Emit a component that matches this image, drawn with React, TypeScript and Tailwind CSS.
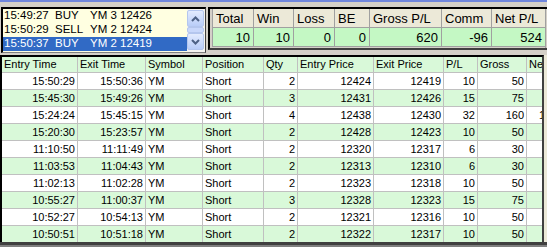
import React from "react";

const trades: string[][] = [
  ["15:50:29", "15:50:36", "YM", "Short", "2", "12424", "12419", "10", "50", ""],
  ["15:45:30", "15:49:26", "YM", "Short", "3", "12431", "12426", "15", "75", ""],
  ["15:24:24", "15:45:15", "YM", "Short", "4", "12438", "12430", "32", "160", "1"],
  ["15:20:30", "15:23:57", "YM", "Short", "2", "12428", "12423", "10", "50", ""],
  ["11:10:50", "11:11:49", "YM", "Short", "2", "12320", "12317", "6", "30", ""],
  ["11:03:53", "11:04:43", "YM", "Short", "2", "12313", "12310", "6", "30", ""],
  ["11:02:13", "11:02:28", "YM", "Short", "2", "12323", "12318", "10", "50", ""],
  ["10:55:27", "11:00:37", "YM", "Short", "3", "12328", "12323", "15", "75", ""],
  ["10:52:27", "10:54:13", "YM", "Short", "2", "12321", "12316", "10", "50", ""],
  ["10:50:51", "10:51:18", "YM", "Short", "2", "12322", "12317", "10", "50", ""],
];

const cols = [
  { label: "Entry Time", w: "w-[76px]", right: true },
  { label: "Exit Time", w: "w-[68px]", right: true },
  { label: "Symbol", w: "w-[57px]", right: false },
  { label: "Position", w: "w-[61px]", right: false },
  { label: "Qty", w: "w-[34px]", right: true },
  { label: "Entry Price", w: "w-[76px]", right: true },
  { label: "Exit Price", w: "w-[70px]", right: true },
  { label: "P/L", w: "w-[34px]", right: true },
  { label: "Gross", w: "w-[49px]", right: true },
  { label: "Net", w: "w-[15px]", right: false },
];

const orders = [
  ["15:49:27", "BUY", "YM 3 12426"],
  ["15:50:29", "SELL", "YM 2 12424"],
  ["15:50:37", "BUY", "YM 2 12419"],
];

const stats = [
  { label: "Total", value: "10", w: "w-[41px]" },
  { label: "Win", value: "10", w: "w-[40px]" },
  { label: "Loss", value: "0", w: "w-[41px]" },
  { label: "BE", value: "0", w: "w-[35px]" },
  { label: "Gross P/L", value: "620", w: "w-[72px]" },
  { label: "Comm", value: "-96", w: "w-[50px]" },
  { label: "Net P/L", value: "524", w: "w-[54px]" },
];

function ScrollBtn({ up }: { up: boolean }) {
  return (
    <div className="h-[17px] w-[17px] rounded-[2px] border border-[#b4c6ee] bg-gradient-to-b from-[#e3ebfe] to-[#b9cdf8] flex items-center justify-center">
      <svg width="9" height="6" viewBox="0 0 9 6">
        {up ? (
          <path d="M1 5 L4.5 1.5 L8 5" stroke="#4d6185" strokeWidth="2" fill="none" />
        ) : (
          <path d="M1 1 L4.5 4.5 L8 1" stroke="#4d6185" strokeWidth="2" fill="none" />
        )}
      </svg>
    </div>
  );
}

export default function App() {
  return (
    <div
      className="w-[547px] h-[247px] bg-[#d4d0c8] overflow-hidden flex flex-col"
      style={{ fontFamily: '"Liberation Sans", Arial, sans-serif' }}
    >
      <div className="h-[2px] bg-[#6f86dd] shrink-0" />
      <div className="h-[53px] shrink-0 flex pt-[5px]">
        {/* order list */}
        <div className="ml-[1px] w-[205px] h-[46px] border-l-2 border-t-2 border-black border-r border-b border-r-[#404040] border-b-[#808080] bg-[#ffffe1] flex">
          <div className="flex-1 flex flex-col text-[11.5px] text-black">
            {orders.map((o, i) => (
              <div
                key={i}
                className={
                  "h-[14px] flex items-center pl-[1px] leading-none " +
                  (i === 2 ? "bg-[#316ac5] text-white" : "")
                }
              >
                <span className="w-[51px]">{o[0]}</span>
                <span className="w-[35px]">{o[1]}</span>
                <span>{o[2]}</span>
              </div>
            ))}
          </div>
          <div className="w-[18px] flex flex-col items-start pt-[1px] bg-[#f5f4ef]">
            <ScrollBtn up={true} />
            <div className="h-[6px] w-[17px] my-[0px] rounded-[2px] border border-[#b4c6ee] bg-[#c8d7fb]" />
            <ScrollBtn up={false} />
          </div>
        </div>
        {/* stats */}
        <div className="ml-[2px] w-[339px] h-[43px] border-l-2 border-t-2 border-black border-b-2 border-b-[#404040] pl-[2px] flex">
          <div className="flex flex-col border-r border-[#a0a0a0]">
            <div className="flex h-[19px]">
              {stats.map((s) => (
                <div
                  key={s.label}
                  className={s.w + " border-l border-b border-[#a0a0a0] bg-[#ece9d8] text-[13px] pl-[3px] flex items-center leading-none"}
                >
                  {s.label}
                </div>
              ))}
            </div>
            <div className="flex h-[19px]">
              {stats.map((s) => (
                <div
                  key={s.label}
                  className={s.w + " border-l border-b border-[#a0a0a0] bg-[#c4f8c4] text-[13px] pr-[3px] flex items-center justify-end leading-none"}
                >
                  {s.value}
                </div>
              ))}
            </div>
          </div>
        </div>
      </div>
      {/* trades table */}
      <div className="flex h-[187px] shrink-0">
        <div className="w-[544px] border-l-2 border-t-2 border-black border-r-2 border-r-[#404040] bg-white overflow-hidden text-[11px] text-black">
          <div className="flex h-[16px] bg-[#d9f9d9] border-b border-[#c0c0c0]">
            {cols.map((c, i) => (
              <div
                key={c.label}
                className={
                  c.w +
                  " shrink-0 h-full flex items-center pl-[2px] leading-none overflow-hidden whitespace-nowrap " +
                  (i < cols.length - 1 ? "border-r border-[#c0c0c0]" : "")
                }
              >
                {c.label}
              </div>
            ))}
          </div>
          {trades.map((t, r) => (
            <div
              key={r}
              className={
                "flex h-[17px] border-b border-[#c0c0c0] " + (r % 2 === 1 ? "bg-[#d9f9d9]" : "bg-white")
              }
            >
              {cols.map((c, i) => (
                <div
                  key={i}
                  className={
                    c.w +
                    " shrink-0 h-full flex items-center leading-none overflow-hidden whitespace-nowrap " +
                    (i === cols.length - 1
                      ? "pl-[12px]"
                      : (c.right ? "justify-end pr-[2px] " : "pl-[2px] ") + "border-r border-[#c0c0c0]")
                  }
                >
                  {t[i]}
                </div>
              ))}
            </div>
          ))}
        </div>
        <div className="flex-1 bg-[#ece9d8]" />
      </div>
      <div className="flex-1 border-t-[3px] border-[#404040] bg-[#808080]" />
    </div>
  );
}
